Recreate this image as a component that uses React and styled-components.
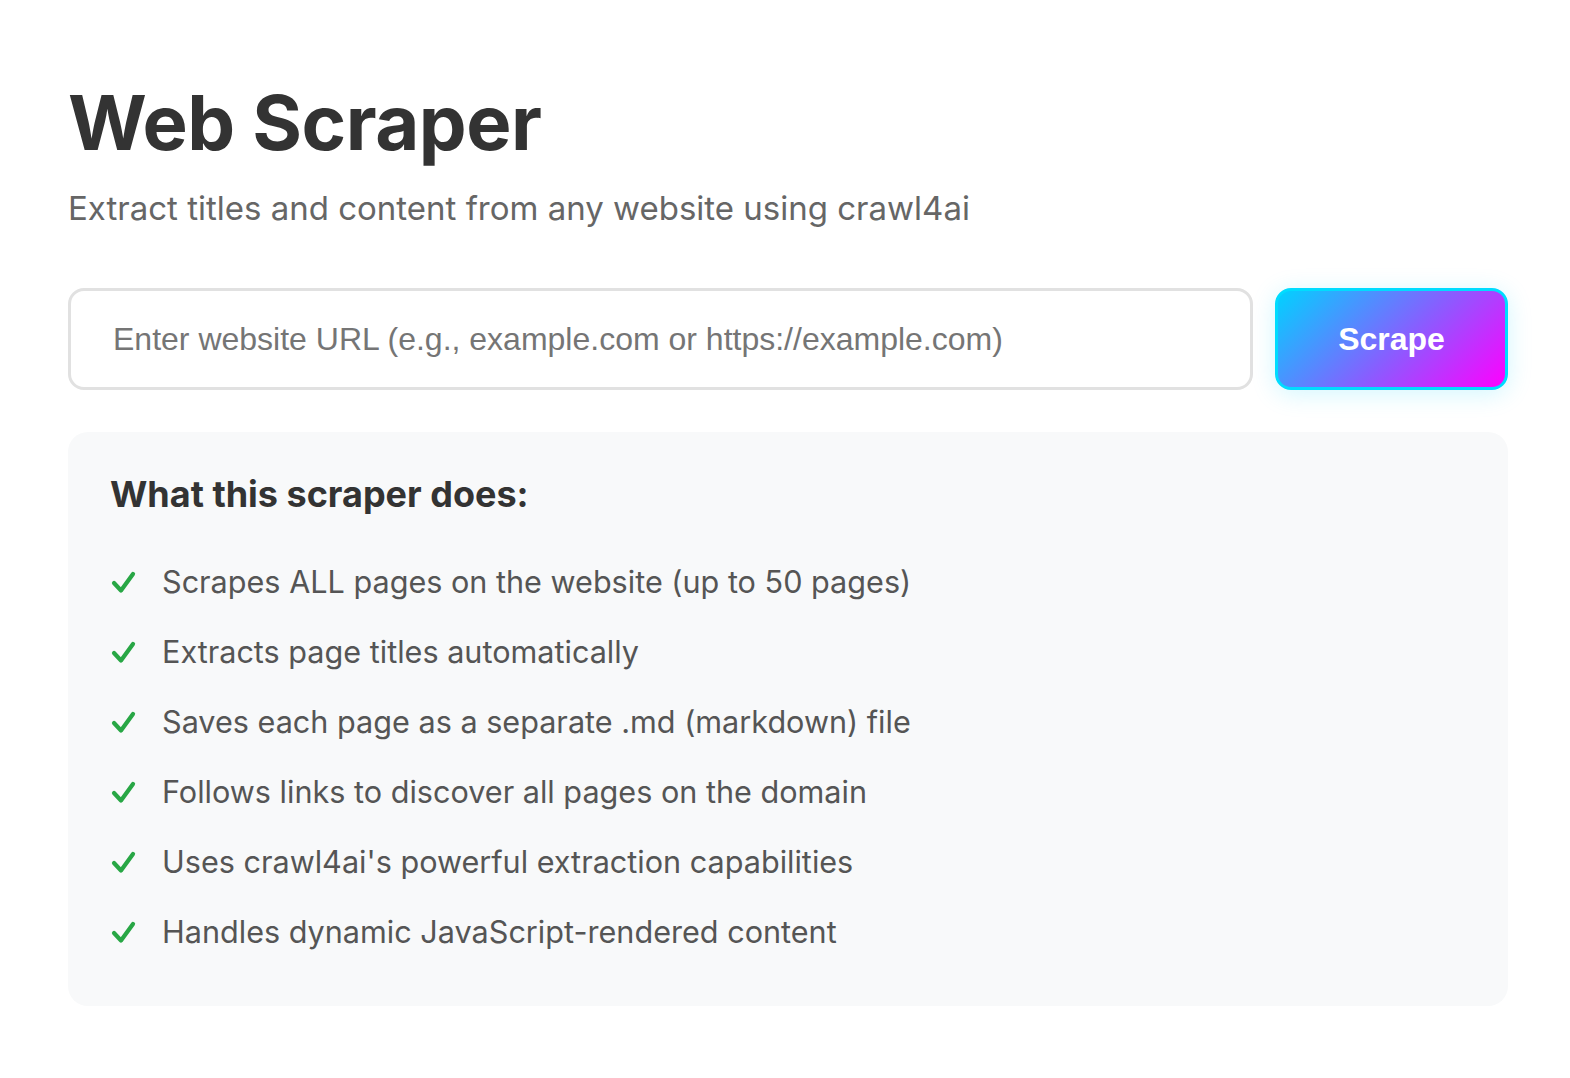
import React, { useState } from "react";
import styled, { createGlobalStyle } from "styled-components";

const GlobalStyle = createGlobalStyle`
  * { box-sizing: border-box; }
  body {
    margin: 0;
    background: #ffffff;
    font-family: Inter, "Noto Sans", sans-serif;
  }
`;

const Container = styled.div`
  padding: 74px 62px 60px 68px;
`;

const Title = styled.h1`
  margin: 0;
  font-size: 76px;
  line-height: 96px;
  font-weight: 700;
  color: #333333;
  letter-spacing: -0.5px;
`;

const Subtitle = styled.p`
  margin: 14px 0 0;
  font-size: 33px;
  line-height: 48px;
  color: #666666;
`;

const Form = styled.form`
  display: flex;
  gap: 22px;
  margin-top: 56px;
`;

const UrlInput = styled.input`
  flex: 1;
  height: 102px;
  padding: 0 42px;
  border: 3px solid #e1e1e1;
  border-radius: 16px;
  font-family: "Liberation Sans", Arial, sans-serif;
  font-size: 32px;
  color: #333;
  outline: none;

  &::placeholder {
    color: #757575;
  }
`;

const Button = styled.button`
  width: 233px;
  height: 102px;
  border: 3px solid #00dcff;
  border-radius: 16px;
  background: linear-gradient(135deg, #00d2ff 0%, #8a5cff 55%, #ff00ff 100%);
  box-shadow: 0 4px 24px rgba(0, 212, 255, 0.18);
  color: #ffffff;
  font-family: "Liberation Sans", Arial, sans-serif;
  font-size: 32px;
  font-weight: 700;
  cursor: pointer;
`;

const InfoBox = styled.section`
  margin-top: 42px;
  padding: 40px 42px 40px;
  background: #f8f9fa;
  border-radius: 20px;
`;

const InfoTitle = styled.h3`
  margin: 0 0 30px;
  font-size: 36px;
  line-height: 44px;
  font-weight: 700;
  color: #333333;
`;

const List = styled.ul`
  margin: 0;
  padding: 0;
  list-style: none;
`;

const Item = styled.li`
  display: flex;
  align-items: center;
  height: 70px;
  font-size: 30.6px;
  color: #555555;
`;

const Check = styled.svg`
  width: 25px;
  height: 23px;
  margin: 2px 26px 0 1px;
  flex-shrink: 0;
`;

const CheckIcon = () => (
  <Check viewBox="0 0 25 23" fill="none">
    <path
      d="M3 12 L10 19.5 L22 3"
      stroke="#28a745"
      strokeWidth="4.2"
      strokeLinecap="round"
      strokeLinejoin="round"
    />
  </Check>
);

const features = [
  "Scrapes ALL pages on the website (up to 50 pages)",
  "Extracts page titles automatically",
  "Saves each page as a separate .md (markdown) file",
  "Follows links to discover all pages on the domain",
  "Uses crawl4ai's powerful extraction capabilities",
  "Handles dynamic JavaScript-rendered content",
];

const App = () => {
  const [url, setUrl] = useState("");

  return (
    <>
      <GlobalStyle />
      <Container>
        <Title>Web Scraper</Title>
        <Subtitle>Extract titles and content from any website using crawl4ai</Subtitle>
        <Form onSubmit={(e) => e.preventDefault()}>
          <UrlInput
            type="text"
            value={url}
            onChange={(e) => setUrl(e.target.value)}
            placeholder="Enter website URL (e.g., example.com or https://example.com)"
          />
          <Button type="submit">Scrape</Button>
        </Form>
        <InfoBox>
          <InfoTitle>What this scraper does:</InfoTitle>
          <List>
            {features.map((f) => (
              <Item key={f}>
                <CheckIcon />
                {f}
              </Item>
            ))}
          </List>
        </InfoBox>
      </Container>
    </>
  );
};

export default App;
